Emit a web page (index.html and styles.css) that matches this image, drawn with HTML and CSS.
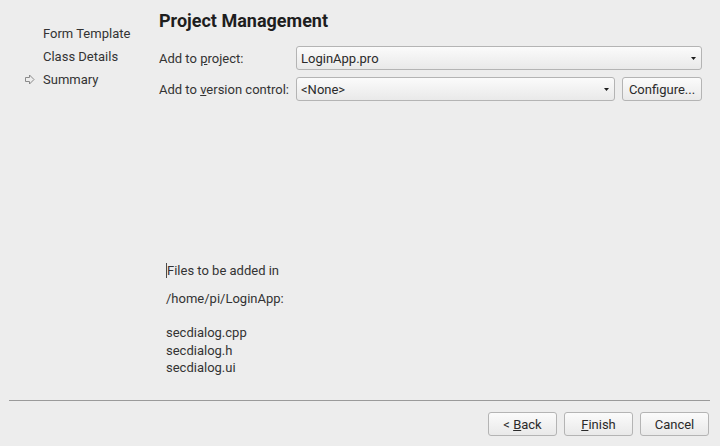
FILE: index.html
```html
<!DOCTYPE html>
<html>
<head>
<meta charset="utf-8">
<link rel="stylesheet" href="styles.css">
</head>
<body>
<div class="top">
  <ul class="steps">
    <li class="step"><span class="slot"></span>Form Template</li>
    <li class="step"><span class="slot"></span>Class Details</li>
    <li class="step current"><span class="slot"><svg width="11" height="11" viewBox="0 0 11 11"><path d="M1.5 3.5 H5.5 V1 L10 5.5 L5.5 10 V7.5 H1.5 Z" fill="none" stroke="#8a8a8a" stroke-width="1" stroke-linejoin="round"/></svg></span>Summary</li>
  </ul>
  <div class="content">
    <h1 class="title">Project Management</h1>
    <div class="form">
      <label class="label">Add to <u>p</u>roject:</label>
      <div class="combo wide"><span>LoginApp.pro</span><svg class="arrow" width="5" height="3" viewBox="0 0 5 3"><polygon points="0,0 5,0 2.5,3" fill="#1c1c1c"/></svg></div>
      <label class="label">Add to <u>v</u>ersion control:</label>
      <div class="combo"><span>&lt;None&gt;</span><svg class="arrow" width="5" height="3" viewBox="0 0 5 3"><polygon points="0,0 5,0 2.5,3" fill="#1c1c1c"/></svg></div>
      <button class="btn configure">Configure...</button>
    </div>
    <div class="files">
      <p class="para first"><span class="caret"></span>Files to be added in</p>
      <p class="para second">/home/pi/LoginApp:</p>
      <p class="para">secdialog.cpp</p>
      <p class="para">secdialog.h</p>
      <p class="para">secdialog.ui</p>
    </div>
  </div>
</div>
<div class="separator"></div>
<div class="buttons">
  <button class="btn action">&lt; <u>B</u>ack</button>
  <button class="btn action"><u>F</u>inish</button>
  <button class="btn action">Cancel</button>
</div>
</body>
</html>
```

FILE: styles.css
```css
html, body {
  margin: 0;
  padding: 0;
}
body {
  width: 720px;
  height: 446px;
  background: #ededed;
  font-family: Roboto, "Liberation Sans", sans-serif;
  font-size: 13px;
  color: #333333;
  overflow: hidden;
}
.top {
  height: 400px;
  display: flex;
}
.steps {
  list-style: none;
  margin: 0;
  padding: 22px 0 0 24px;
  width: 135px;
}
.step {
  display: flex;
  align-items: center;
  height: 23px;
  line-height: 23px;
  white-space: nowrap;
}
.slot {
  width: 19px;
  height: 23px;
  display: flex;
  align-items: center;
  flex: none;
}
.slot svg {
  margin-top: -1px;
}
.content {
  flex: 1;
  padding-right: 18px;
}
.title {
  margin: 9px 0 0 0;
  font-size: 18px;
  line-height: 24px;
  font-weight: 700;
  color: #1e1e1e;
}
.form {
  margin-top: 13px;
  display: grid;
  grid-template-columns: 137px 1fr 87px;
  grid-auto-rows: 24px;
  row-gap: 7px;
  align-items: center;
}
.label {
  white-space: nowrap;
}
.combo {
  box-sizing: border-box;
  height: 24px;
  border: 1px solid #b4b4b4;
  border-radius: 3px;
  background: linear-gradient(#fbfbfb, #e9e9e9);
  display: flex;
  align-items: center;
  justify-content: space-between;
  padding: 0 5px 0 4px;
  color: #2a2a2a;
}
.combo.wide {
  grid-column: 2 / 4;
}
.arrow {
  margin-top: 1px;
}
.btn {
  box-sizing: border-box;
  height: 24px;
  border: 1px solid #b4b4b4;
  border-radius: 3px;
  background: linear-gradient(#fbfbfb, #e9e9e9);
  font-family: Roboto, "Liberation Sans", sans-serif;
  font-size: 13px;
  color: #2a2a2a;
  padding: 0;
}
.configure {
  margin-left: 7px;
  width: 80px;
}
.files {
  margin-top: 161px;
  margin-left: 7px;
}
.para {
  margin: 0;
  line-height: 17.5px;
  white-space: nowrap;
}
.para.first {
  margin-bottom: 10.5px;
}
.para.second {
  margin-bottom: 16.5px;
}
.caret {
  display: inline-block;
  width: 1px;
  height: 15px;
  background: #4a4a4a;
  vertical-align: -3px;
}
.separator {
  height: 1px;
  background: #9a9a9a;
  margin: 0 10px 0 9px;
}
.buttons {
  display: flex;
  justify-content: flex-end;
  gap: 7px;
  padding: 11px 11px 0 0;
}
.action {
  width: 69px;
}
```
